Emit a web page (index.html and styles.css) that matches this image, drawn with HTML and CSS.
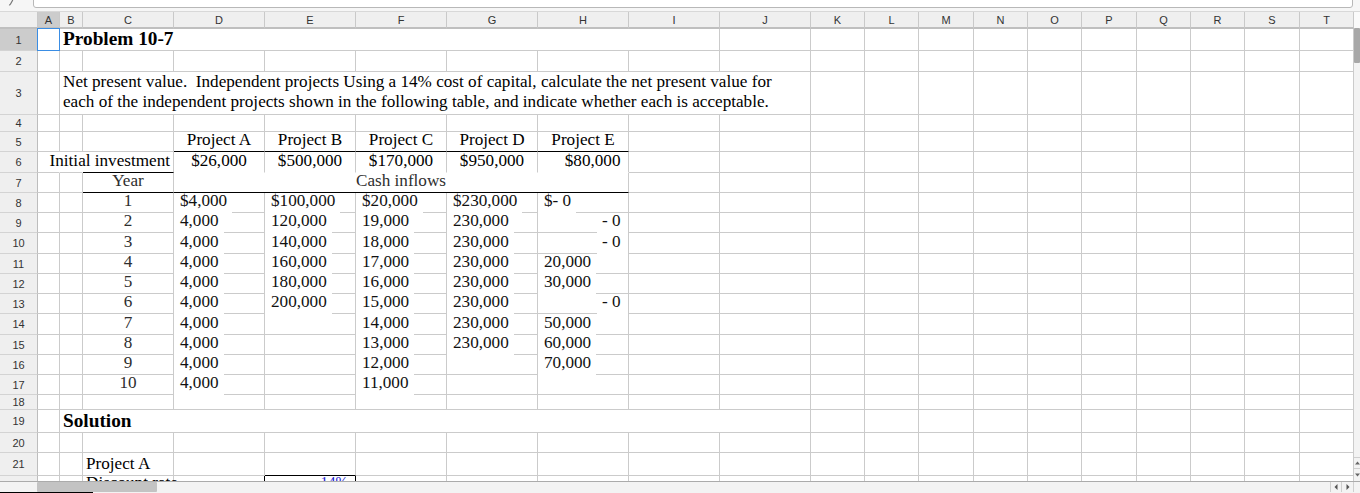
FILE: index.html
```html
<!DOCTYPE html>
<html>
<head>
<meta charset="utf-8">
<title>Problem 10-7</title>
<link rel="stylesheet" href="styles.css">
</head>
<body>
<div class="app">
  <div class="topbar">
    <svg class="fx" width="33" height="11" viewBox="0 0 33 11"><path d="M12.8 0 L10.4 4.2 Q9.9 5 9 4.8" fill="none" stroke="#777" stroke-width="1.2"/></svg>
    <div class="formula"></div>
  </div>
  <div class="main">
    <div class="grid">
      <div class="ch"></div><div class="ch sel">A</div><div class="ch">B</div><div class="ch">C</div><div class="ch">D</div><div class="ch">E</div><div class="ch">F</div><div class="ch">G</div><div class="ch">H</div><div class="ch">I</div><div class="ch">J</div><div class="ch">K</div><div class="ch">L</div><div class="ch">M</div><div class="ch">N</div><div class="ch">O</div><div class="ch">P</div><div class="ch">Q</div><div class="ch">R</div><div class="ch">S</div><div class="ch">T</div>

      <div class="rh sel">1</div><div class="cur"></div><div class="s8 title">Problem 10-7</div><div></div>
      <div></div><div></div><div></div><div></div><div></div><div></div><div></div><div></div><div></div><div></div>

      <div class="rh">2</div><div></div><div></div><div></div><div></div><div></div><div></div><div></div><div></div><div></div><div></div>
      <div></div><div></div><div></div><div></div><div></div><div></div><div></div><div></div><div></div><div></div>

      <div class="rh">3</div><div></div><div class="s9 wrap">Net present value.&nbsp; Independent projects Using a 14% cost of capital, calculate the net present value for<br>each of the independent projects shown in the following table, and indicate whether each is acceptable.</div>
      <div></div><div></div><div></div><div></div><div></div><div></div><div></div><div></div><div></div><div></div>

      <div class="rh">4</div><div></div><div></div><div></div><div></div><div></div><div></div><div></div><div></div><div></div><div></div>
      <div></div><div></div><div></div><div></div><div></div><div></div><div></div><div></div><div></div><div></div>

      <div class="rh">5</div><div></div><div></div><div></div>
      <div class="ctr bb">Project A</div><div class="ctr bb">Project B</div><div class="ctr bb">Project C</div><div class="ctr bb">Project D</div><div class="ctr bb">Project E</div>
      <div></div><div></div>
      <div></div><div></div><div></div><div></div><div></div><div></div><div></div><div></div><div></div><div></div>

      <div class="rh">6</div><div class="nr"></div><div class="nr"></div><div class="rt bb">Initial investment</div>
      <div class="ctr nb">$26,000</div><div class="ctr nb">$500,000</div><div class="ctr nb">$170,000</div><div class="ctr nb">$950,000</div><div class="rt nb pr">$80,000</div>
      <div></div><div></div>
      <div></div><div></div><div></div><div></div><div></div><div></div><div></div><div></div><div></div><div></div>

      <div class="rh">7</div><div></div><div></div><div class="ctr bb g">Year</div><div class="s5 ctr bb g">Cash inflows</div>
      <div></div><div></div>
      <div></div><div></div><div></div><div></div><div></div><div></div><div></div><div></div><div></div><div></div>

      <div class="rh">8</div><div></div><div></div><div class="ctr g">1</div>
      <div class="d"><span class="v">$4,000</span></div><div class="d"><span class="v">$100,000</span></div><div class="d"><span class="v">$20,000</span></div><div class="d"><span class="v">$230,000</span></div><div class="d"><span class="v">$- 0</span></div>
      <div></div><div></div>
      <div></div><div></div><div></div><div></div><div></div><div></div><div></div><div></div><div></div><div></div>

      <div class="rh">9</div><div></div><div></div><div class="ctr g">2</div>
      <div class="d"><span class="v">4,000</span></div><div class="d"><span class="v">120,000</span></div><div class="d"><span class="v">19,000</span></div><div class="d"><span class="v">230,000</span></div><div class="d rt"><span class="v">- 0</span></div>
      <div></div><div></div>
      <div></div><div></div><div></div><div></div><div></div><div></div><div></div><div></div><div></div><div></div>

      <div class="rh">10</div><div></div><div></div><div class="ctr g">3</div>
      <div class="d"><span class="v">4,000</span></div><div class="d"><span class="v">140,000</span></div><div class="d"><span class="v">18,000</span></div><div class="d"><span class="v">230,000</span></div><div class="d rt"><span class="v">- 0</span></div>
      <div></div><div></div>
      <div></div><div></div><div></div><div></div><div></div><div></div><div></div><div></div><div></div><div></div>

      <div class="rh">11</div><div></div><div></div><div class="ctr g">4</div>
      <div class="d"><span class="v">4,000</span></div><div class="d"><span class="v">160,000</span></div><div class="d"><span class="v">17,000</span></div><div class="d"><span class="v">230,000</span></div><div class="d"><span class="v">20,000</span></div>
      <div></div><div></div>
      <div></div><div></div><div></div><div></div><div></div><div></div><div></div><div></div><div></div><div></div>

      <div class="rh">12</div><div></div><div></div><div class="ctr g">5</div>
      <div class="d"><span class="v">4,000</span></div><div class="d"><span class="v">180,000</span></div><div class="d"><span class="v">16,000</span></div><div class="d"><span class="v">230,000</span></div><div class="d"><span class="v">30,000</span></div>
      <div></div><div></div>
      <div></div><div></div><div></div><div></div><div></div><div></div><div></div><div></div><div></div><div></div>

      <div class="rh">13</div><div></div><div></div><div class="ctr g">6</div>
      <div class="d"><span class="v">4,000</span></div><div class="d"><span class="v">200,000</span></div><div class="d"><span class="v">15,000</span></div><div class="d"><span class="v">230,000</span></div><div class="d rt"><span class="v">- 0</span></div>
      <div></div><div></div>
      <div></div><div></div><div></div><div></div><div></div><div></div><div></div><div></div><div></div><div></div>

      <div class="rh">14</div><div></div><div></div><div class="ctr g">7</div>
      <div class="d"><span class="v">4,000</span></div><div></div><div class="d"><span class="v">14,000</span></div><div class="d"><span class="v">230,000</span></div><div class="d"><span class="v">50,000</span></div>
      <div></div><div></div>
      <div></div><div></div><div></div><div></div><div></div><div></div><div></div><div></div><div></div><div></div>

      <div class="rh">15</div><div></div><div></div><div class="ctr g">8</div>
      <div class="d"><span class="v">4,000</span></div><div></div><div class="d"><span class="v">13,000</span></div><div class="d"><span class="v">230,000</span></div><div class="d"><span class="v">60,000</span></div>
      <div></div><div></div>
      <div></div><div></div><div></div><div></div><div></div><div></div><div></div><div></div><div></div><div></div>

      <div class="rh">16</div><div></div><div></div><div class="ctr g">9</div>
      <div class="d"><span class="v">4,000</span></div><div></div><div class="d"><span class="v">12,000</span></div><div></div><div class="d"><span class="v">70,000</span></div>
      <div></div><div></div>
      <div></div><div></div><div></div><div></div><div></div><div></div><div></div><div></div><div></div><div></div>

      <div class="rh">17</div><div></div><div></div><div class="ctr g">10</div>
      <div class="d"><span class="v">4,000</span></div><div></div><div class="d"><span class="v">11,000</span></div><div></div><div></div>
      <div></div><div></div>
      <div></div><div></div><div></div><div></div><div></div><div></div><div></div><div></div><div></div><div></div>

      <div class="rh">18</div><div></div><div></div><div></div><div></div><div></div><div></div><div></div><div></div><div></div><div></div>
      <div></div><div></div><div></div><div></div><div></div><div></div><div></div><div></div><div></div><div></div>

      <div class="rh">19</div><div></div><div class="s9 title">Solution</div>
      <div></div><div></div><div></div><div></div><div></div><div></div><div></div><div></div><div></div><div></div>

      <div class="rh">20</div><div></div><div></div><div></div><div></div><div></div><div></div><div></div><div></div><div></div><div></div>
      <div></div><div></div><div></div><div></div><div></div><div></div><div></div><div></div><div></div><div></div>

      <div class="rh">21</div><div></div><div></div><div>Project A</div><div></div><div class="kb"></div><div></div><div></div><div></div><div></div><div></div>
      <div></div><div></div><div></div><div></div><div></div><div></div><div></div><div></div><div></div><div></div>

      <div class="rh"></div><div></div><div></div><div>Discount rate</div><div class="kr"></div><div class="kr rt pct">14%</div><div></div><div></div><div></div><div></div><div></div>
      <div></div><div></div><div></div><div></div><div></div><div></div><div></div><div></div><div></div><div></div>
    </div>
    <div class="vscroll">
      <div class="vtop"></div>
      <div class="vthumb"></div>
      <div class="vsp"></div>
      <div class="vbtn"><svg width="5" height="4" viewBox="0 0 5 4"><path d="M0 3.5 L2.5 0.5 L5 3.5 Z" fill="#666"/></svg></div>
      <div class="vbtn vlast"><svg width="5" height="4" viewBox="0 0 5 4"><path d="M0 0.5 L2.5 3.5 L5 0.5 Z" fill="#666"/></svg></div>
    </div>
  </div>
  <div class="hscroll">
    <div class="htrack">
      <div class="hleft"></div>
      <div class="hthumb"></div>
      <div class="hsp"></div>
      <div class="hbtn"><svg width="4" height="6" viewBox="0 0 4 6"><path d="M3.5 0 L0.5 3 L3.5 6 Z" fill="#555"/></svg></div>
      <div class="hbtn hb2"><svg width="4" height="6" viewBox="0 0 4 6"><path d="M0.5 0 L3.5 3 L0.5 6 Z" fill="#555"/></svg></div>
      <div class="hbtn hb3"></div>
    </div>
    <div class="tabline"><div class="tabmark"></div></div>
  </div>
</div>
</body>
</html>
```

FILE: styles.css
```css
* { box-sizing: border-box; }
html, body { margin: 0; padding: 0; background: #fff; }

.app {
  width: 1360px;
  height: 493px;
  display: flex;
  flex-direction: column;
  overflow: hidden;
  font-family: "Liberation Serif", "Times New Roman", serif;
  color: #000;
}

.topbar {
  flex: none;
  height: 12px;
  display: flex;
  background: #f6f6f6;
  border-bottom: 1px solid #d8d8d8;
}
.fx { flex: none; width: 33px; height: 11px; display: block; }
.formula {
  flex: none;
  width: 1320px;
  height: 14px;
  margin-top: -6px;
  background: #fff;
  border: 1px solid #b8b8b8;
  border-radius: 3px;
}

.main {
  flex: 1;
  min-height: 0;
  display: flex;
  overflow: hidden;
}

.grid {
  flex: none;
  width: 1354px;
  display: grid;
  grid-template-columns: 38px 22px 23px repeat(8, 91px) 54px 54px 55px 54px 54px 55px 54px 54px 55px 54px;
  grid-template-rows: 17px 22px 21px 43px 17px 20px 21px 20px 20px 20px 21px 20px 20px 20px 21px 20px 20px 20px 15px 23px 20px 23px 19px;
  align-content: start;
  background: #fff;
}

.grid > div {
  min-width: 0;
  border-right: 1px solid #cbcbcb;
  border-bottom: 1px solid #cbcbcb;
  display: flex;
  align-items: flex-end;
  padding: 0 3px 4px;
  font-size: 17.15px;
  line-height: 15px;
  white-space: nowrap;
}

.grid > .ch {
  background: #efefef;
  border-right-color: #c9c9c9;
  border-bottom: 2px solid #bfbfbf;
  justify-content: center;
  align-items: center;
  padding: 0;
  font-family: "Liberation Sans", Arial, sans-serif;
  font-size: 11px;
  line-height: 12px;
  color: #333;
}
.grid > .rh {
  background: #efefef;
  border-right-color: #bdbdbd;
  border-bottom-color: #d3d3d3;
  justify-content: center;
  align-items: center;
  padding: 0;
  font-family: "Liberation Sans", Arial, sans-serif;
  font-size: 11px;
  line-height: 12px;
  color: #333;
}
.grid > .sel { background: #cccccc; }

.cur { position: relative; }
.cur::after {
  content: "";
  position: absolute;
  left: -1px;
  top: -1px;
  right: -1px;
  bottom: -1px;
  border: 1px solid #3a8de4;
}

.s5 { grid-column: span 5; }
.s8 { grid-column: span 8; }
.s9 { grid-column: span 9; }

.grid > .title { font-weight: bold; font-size: 19.3px; }
.grid > .wrap { display: block; line-height: 20px; padding: 0 3px 2px; }

.grid > .ctr { justify-content: center; }
.grid > .rt { justify-content: flex-end; }
.grid > .pr { padding-right: 7.5px; }
.grid > .bb { border-bottom-color: #000; }
.grid > .nb { border-bottom-color: transparent; }
.grid > .nr { border-right-color: transparent; }
.grid > .kb { border-bottom-color: #000; }
.grid > .kr { border-right-color: #000; }
.grid > .pct { color: #1a1ad0; font-size: 15px; padding-right: 7px; }
.g { color: #2e2e2e; }

.grid > .d { padding: 0; }
.v {
  background: #fff;
  box-shadow: 0 1px 0 #fff;
  padding: 0 5px 4px 6px;
  color: #111;
}
.grid > .d.rt .v { padding: 0 7.5px 4px 5px; }

.vscroll {
  flex: none;
  width: 6px;
  display: flex;
  flex-direction: column;
  background: #f3f3f3;
}
.vtop { flex: none; height: 16px; background: #fafafa; }
.vthumb { flex: none; height: 35px; background: #a8a8a8; border-radius: 1px; }
.vsp { flex: 1; }
.vbtn {
  flex: none;
  height: 11px;
  border-top: 1px solid #cfcfcf;
  display: flex;
  align-items: center;
  justify-content: center;
  overflow: hidden;
}
.vlast { height: 13px; }

.hscroll {
  flex: none;
  height: 12px;
  display: flex;
  flex-direction: column;
  background: #f3f3f3;
  border-top: 1px solid #ababab;
}
.htrack { flex: 1; display: flex; }
.hleft { flex: none; width: 37px; }
.hthumb { flex: none; width: 120px; background: #c3c3c3; border-radius: 1px; }
.hsp { flex: 1; }
.hbtn {
  flex: none;
  width: 11px;
  border-left: 1px solid #cfcfcf;
  display: flex;
  align-items: center;
  justify-content: center;
}
.hb2 { width: 12px; }
.hb3 { width: 7px; }
.tabline { flex: none; height: 1px; }
.tabmark { width: 93px; height: 1px; background: #000; }
```
